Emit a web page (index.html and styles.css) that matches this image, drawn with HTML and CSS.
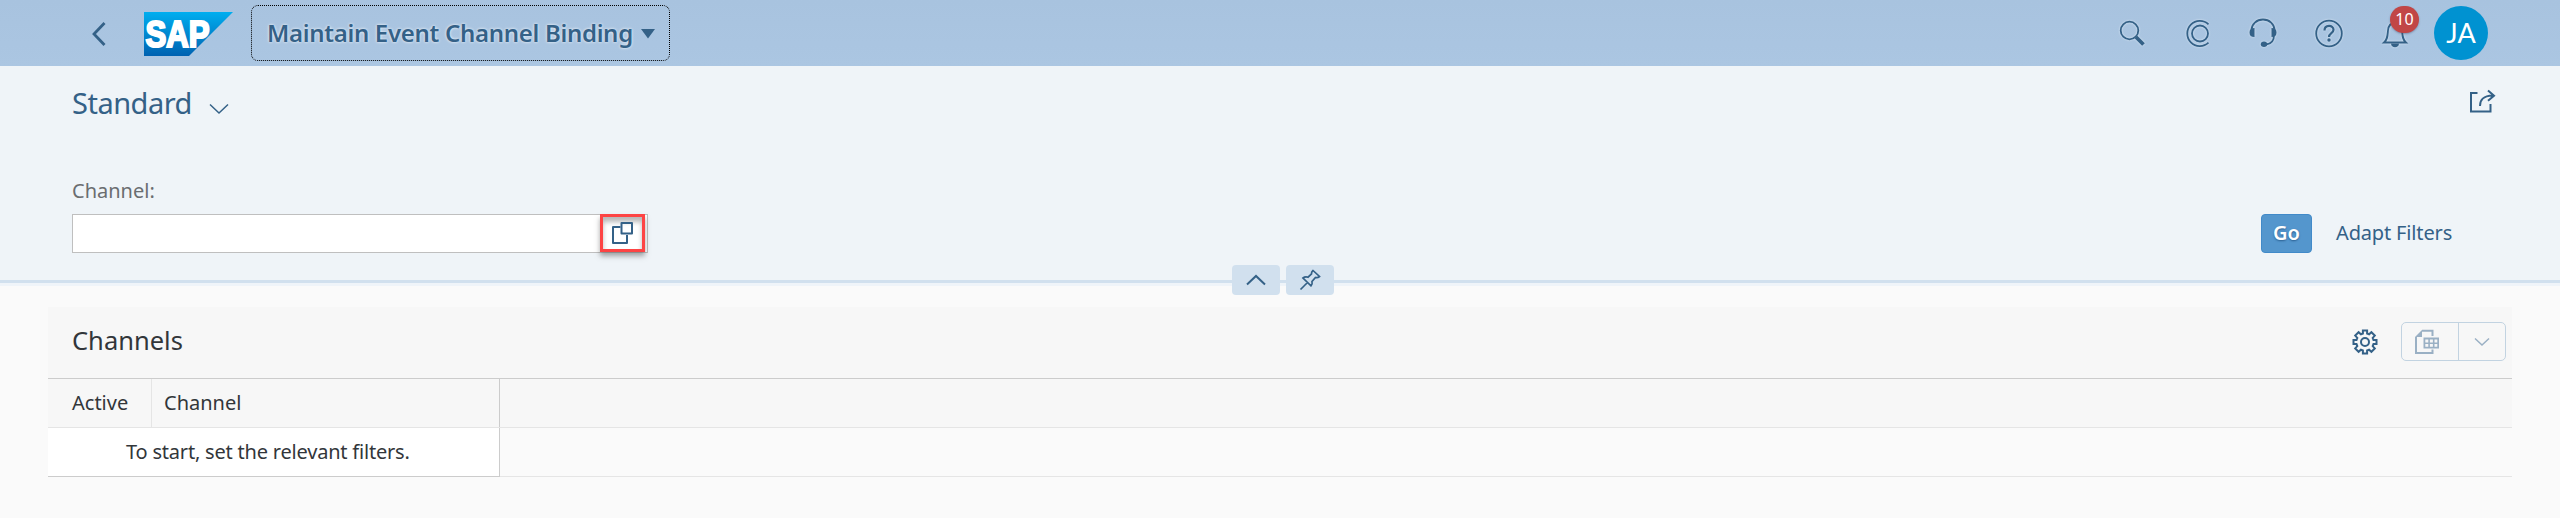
FILE: index.html
```html
<!DOCTYPE html>
<html lang="en">
<head>
<meta charset="utf-8">
<title>Maintain Event Channel Binding</title>
<link rel="stylesheet" href="styles.css">
</head>
<body>
<header class="shell">
  <svg class="back" width="20" height="30" viewBox="0 0 20 30"><path d="M15.500 4L5 15l10.500 11" fill="none" stroke="currentColor" stroke-width="2.800"/></svg>
  <svg class="logo" width="90" height="44" viewBox="0 0 90 44">
    <defs><linearGradient id="sap" x1="0" y1="0" x2="0" y2="1"><stop offset="0" stop-color="#00aeef"/><stop offset="1" stop-color="#0062b1"/></linearGradient></defs>
    <path d="M0 0h89L45 44H0z" fill="url(#sap)"/>
    <text class="logo-text" x="1.500" y="35" textLength="64" lengthAdjust="spacingAndGlyphs">SAP</text>
  </svg>
  <button class="app-title"><span class="app-name">Maintain Event Channel Binding</span><svg class="caret" width="14" height="10" viewBox="0 0 14 10"><path d="M0 0h14L7 9.500z" fill="currentColor"/></svg></button>
  <nav class="tools">
    <svg class="tool search" width="30" height="30" viewBox="0 0 30 30"><circle cx="11.500" cy="12.500" r="8.800"/><path d="M18 19l7.500 7.500" stroke-width="3.800"/></svg>
    <svg class="tool copilot" width="30" height="30" viewBox="0 0 30 30"><circle cx="15" cy="15.500" r="8"/><path d="M23.500 6.300A12.600 12.600 0 1 0 23.500 24.700"/></svg>
    <svg class="tool" width="30" height="30" viewBox="0 0 30 30"><path d="M3.500 12a11.500 10.500 0 0 1 23 0M26 17c0 6-2.500 9-8 9.500"/><path d="M6.500 10v9C3 19 1.500 17.500 1.500 14.500S3 10 6.500 10zM23.500 10v9c3.500 0 5-1.500 5-4.500s-1.500-4.500-5-4.500z" class="solid"/><ellipse cx="16" cy="26.300" rx="3.200" ry="2.700" class="solid"/></svg>
    <svg class="tool" width="30" height="30" viewBox="0 0 30 30"><circle cx="15" cy="15.500" r="12.800"/><path d="M10.500 12.500c0-6 9-6 9-.8 0 3.600-4.500 3.200-4.500 7.300" stroke-width="2.200"/><circle cx="15" cy="22" r="1.700" class="solid"/></svg>
    <span class="bell">
      <svg class="tool" width="30" height="30" viewBox="0 0 30 30"><path d="M4 24.500c3.500-3 3.500-6.500 4-12C8.400 7.500 11 5 15 5s6.600 2.500 7 7.500c.5 5.500.5 9 4 12z"/><path d="M11 25.500h8c0 5-8 5-8 0z" class="solid"/></svg>
      <span class="badge">10</span>
    </span>
    <span class="avatar">JA</span>
  </nav>
</header>
<section class="filters">
  <div class="variant">
    <span class="variant-name">Standard</span>
    <svg class="variant-arrow" width="20" height="12" viewBox="0 0 20 12"><path d="M1 1.500l9 8.500 9-8.500" class="line"/></svg>
    <svg class="share" width="28" height="28" viewBox="0 0 28 28"><path d="M9.500 5H3v18.500h19.500V16" class="line2"/><path d="M12 18C12 11.500 15 8 24.500 7.500M20 2.500l6 5.200-6 5" class="line2"/></svg>
  </div>
  <label class="field-label">Channel:</label>
  <div class="filter-row">
    <div class="input">
      <span class="value-help"><svg width="24" height="26" viewBox="0 0 24 26"><path d="M9.500 7H2v16h14v-8" class="line3"/><path d="M10.500 3H21v10.500H10.500z" class="line3"/></svg></span>
    </div>
    <button class="go">Go</button>
    <button class="adapt">Adapt Filters</button>
  </div>
  <div class="handles">
    <span class="handle"><svg width="20" height="12" viewBox="0 0 20 12"><path d="M1 10.500L10 2l9 8.500" class="line2"/></svg></span>
    <span class="handle"><svg width="22" height="22" viewBox="0 0 22 22"><path d="M1.500 20.500L9 13M14 1.500l6.500 6c-1.500 1.300-2.500 1.300-4 1L13 12.500c.5 2 .2 3.200-1 4.300L4 9c1.500-1.200 3-1.300 5-.8L12.500 5c-.2-1.500.2-2.500 1.500-3.500z" class="pin"/></svg></span>
  </div>
</section>
<main class="panel">
  <div class="panel-head">
    <h2 class="panel-title">Channels</h2>
    <svg class="gear" width="26" height="26" viewBox="0 0 26 26"><path d="M10.900 1.500h4.200v3l2 .8 2.300-2.100 3.400 3.400-2.100 2.300.8 2h3v4.200h-3l-.8 2 2.100 2.300-3.400 3.400-2.300-2.100-2 .8v3h-4.200v-3l-2-.8-2.300 2.100-3.400-3.400 2.100-2.300-.8-2h-3v-4.200h3l.8-2-2.100-2.300 3.400-3.400 2.300 2.100 2-.8z" class="line2"/><circle cx="13" cy="13" r="4" class="line2"/></svg>
    <div class="split">
      <span class="split-main"><svg width="26" height="26" viewBox="0 0 26 26"><path d="M2 8v16h16.500v-3.500M8 1.800h10.500V7" class="line2"/><path d="M8 1v7H1z" fill="currentColor"/><path d="M9.500 8.500H25v11H9.500z" fill="currentColor"/><path d="M11.300 10.500h3v3h-3zm4.600 0h3v3h-3zm4.600 0h2.800v3h-2.800zm-9.200 4.600h3v2.600h-3zm4.600 0h3v2.600h-3zm4.600 0h2.800v2.600h-2.800z" fill="#f7f7f7"/></svg></span>
      <span class="split-arrow"><svg width="16" height="10" viewBox="0 0 16 10"><path d="M1 1.500l7 6.500 7-6.500" class="line"/></svg></span>
    </div>
  </div>
  <div class="row head-row">
    <div class="cell active">Active</div>
    <div class="cell channel">Channel</div>
  </div>
  <div class="row">
    <div class="cell message"><span class="message-text">To start, set the relevant filters.</span></div>
  </div>
</main>
</body>
</html>
```
FILE: styles.css
```css
* { box-sizing: border-box; }
html { height: 100%; overflow: hidden; background: #fafafa; }
body { margin: 0; color: #32363a; font-family: "Noto Sans", sans-serif; font-size: 20px; height: 100%; overflow: hidden; }
svg { display: block; flex: none; overflow: visible; }
button { font: inherit; border: 0; background: none; padding: 0; color: inherit; white-space: nowrap; }
.line, .line2, .line3, .pin { fill: none; stroke: currentColor; }
.line { stroke-width: 1.500; }
.line2 { stroke-width: 2; }
.line3 { stroke-width: 2; stroke-linejoin: round; }
.pin { stroke-width: 1.700; }

.shell { height: 66px; display: flex; align-items: center; padding: 0 72px 0 89px; background: linear-gradient(#a8c3df, #abc6e2); color: #346187; }
.back { margin-top: 1px; }
.logo { margin: 2px 0 0 35px; }
.logo-text { font-family: "Liberation Sans", sans-serif; font-weight: 700; font-size: 36px; fill: #fff; stroke: #fff; stroke-width: 2.200; }
.app-title { width: 419px; height: 56px; margin-left: 17px; padding-left: 15px; display: flex; align-items: center; gap: 8px; border: 1px dotted #000; border-radius: 7px; }
.app-name { width: 366px; font-size: 24px; font-weight: 600; letter-spacing: -0.300px; line-height: 30px; margin-top: -1px; text-align: left; text-shadow: 0 0 3px #fff; }
.caret { margin-top: 1px; }
.tools { margin-left: auto; display: flex; align-items: center; }
.tool { margin-right: 36px; fill: none; stroke: currentColor; stroke-width: 1.800; filter: drop-shadow(0 0 1px #dce9f5); }
.search { margin-right: 37px; }
.copilot { margin-right: 33px; }
.solid { fill: currentColor; stroke: none; }
.bell { position: relative; }
.bell .tool { margin-right: 24px; }
.badge { position: absolute; left: 10px; top: -12px; width: 29px; height: 27px; border-radius: 14px; background: #c14646; color: #fff; font-size: 16px; line-height: 27px; text-align: center; box-shadow: 0 1px 2px rgba(60, 60, 90, .4); }
.avatar { width: 54px; height: 54px; border-radius: 50%; background: #0092d1; color: #fff; font-family: Lato, sans-serif; font-size: 27px; line-height: 54px; text-align: center; }

.filters { height: 217px; background: #eff4f8; border-bottom: 3px solid #d1e0ee; box-shadow: 0 3px 0 #eff4f9; color: #346187; position: relative; }
.variant { display: flex; padding: 22px 64px 0 72px; height: 110px; }
.variant-name { width: 121px; font-size: 29px; line-height: 30px; letter-spacing: -0.500px; }
.variant-arrow { margin: 15px 0 0 16px; }
.share { margin-left: auto; }
.field-label { display: block; padding-left: 72px; height: 38px; line-height: 29px; color: #6a6d70; }
.filter-row { display: flex; align-items: center; padding: 0 108px 0 72px; height: 39px; }
.input { width: 576px; height: 39px; background: #fff; border: 1px solid #bfbfbf; display: flex; justify-content: flex-end; padding-right: 2px; margin-right: auto; }
.value-help { width: 45px; height: 38px; margin-top: -1px; border: 3px solid #fd4444; display: flex; align-items: center; justify-content: center; color: #346187; box-shadow: 0 4px 5px rgba(80, 80, 80, .5), inset 0 5px 5px rgba(80, 80, 80, .4); }
.go { width: 51px; height: 39px; padding-bottom: 2px; border: 1px solid #418ac9; border-radius: 4px; background: #5496cd; color: #fff; font-weight: 600; text-shadow: 0 1px 2px #2a5f90; }
.adapt { margin: -2px 0 0 24px; width: 116px; text-align: left; letter-spacing: -0.150px; }
.handles { position: absolute; left: 0; right: 0; top: 199px; display: flex; justify-content: center; gap: 6px; padding-left: 6px; }
.handle { width: 48px; height: 30px; border-radius: 4px; background: #d1e0ee; display: flex; align-items: center; justify-content: center; }

.panel { margin: 24px 48px 0; }
.panel-head { height: 72px; display: flex; align-items: center; padding: 0 6px 2px 24px; background: #f7f7f7; border-bottom: 1px solid #ccc; }
.panel-title { margin: -3px auto 0 0; font-size: 25.500px; font-weight: 400; }
.gear { color: #346187; margin-right: 23px; }
.split { width: 105px; height: 39px; border: 1px solid #c2d3e1; border-radius: 5px; display: flex; color: #9ab0c4; }
.split-main { width: 57px; padding-left: 12px; border-right: 1px solid #c2d3e1; display: flex; align-items: center; }
.split-arrow { flex: 1; display: flex; align-items: center; justify-content: center; }
.row { height: 49px; display: flex; border-bottom: 1px solid #e5e5e5; }
.head-row { background: #f7f7f7; }
.cell { line-height: 47px; white-space: nowrap; }
.active { width: 104px; padding-left: 24px; border-right: 1px solid #e5e5e5; }
.channel { width: 348px; padding-left: 12px; border-right: 1px solid #ccc; }
.message { width: 452px; height: 49px; padding-left: 78px; line-height: 48px; letter-spacing: -0.200px; background: #fff; border-right: 1px solid #ccc; border-bottom: 1px solid #ccc; }
```
